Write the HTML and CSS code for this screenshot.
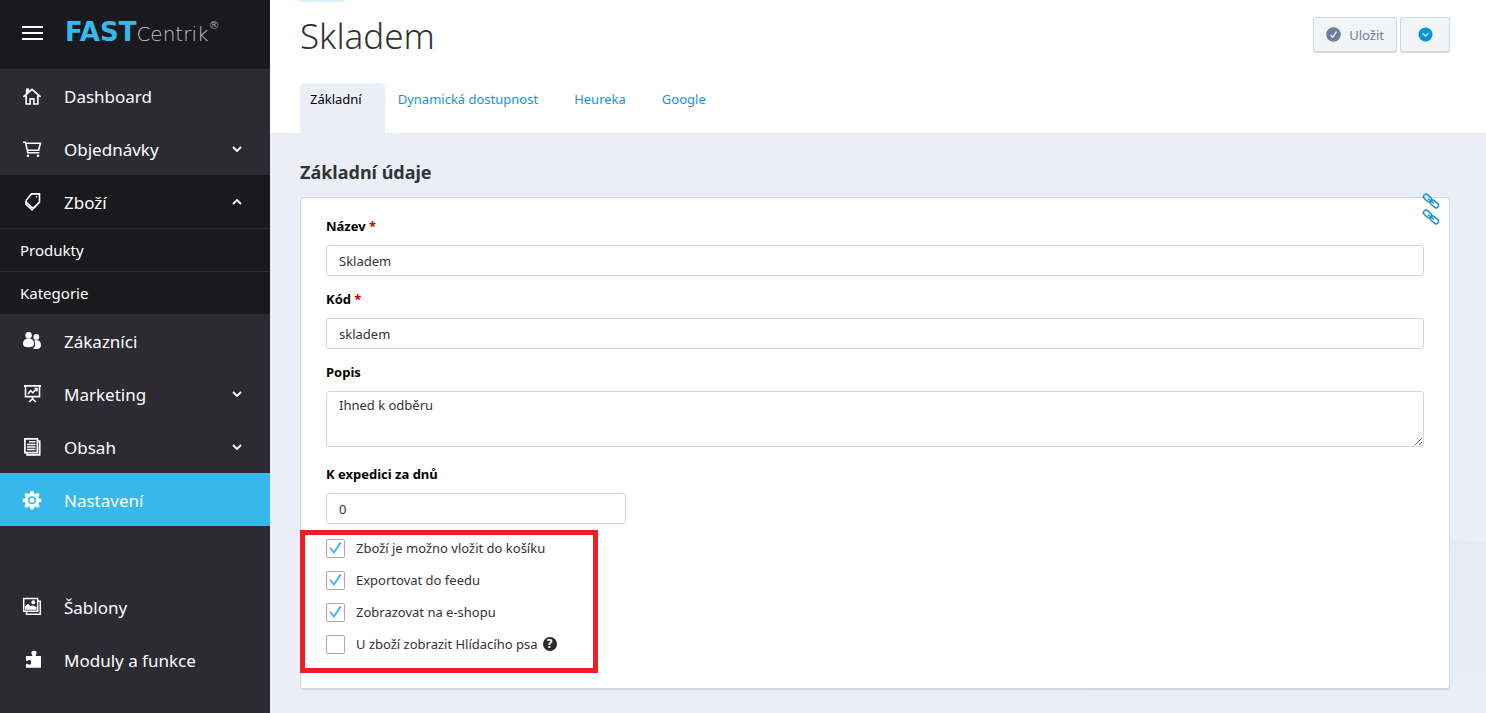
FILE: index.html
```html
<!DOCTYPE html>
<html lang="cs">
<head>
<meta charset="utf-8">
<meta name="viewport" content="width=device-width, initial-scale=1">
<title>Skladem</title>
<link rel="stylesheet" href="styles.css">
</head>
<body>
<div class="app">
  <aside class="sidebar">
    <div class="brand">
      <button class="menu-toggle" type="button" aria-label="Menu"><span></span><span></span><span></span></button>
      <a class="logo" href="#"><span class="logo-fast">FAST</span><span class="logo-centrik">Centrik</span><span class="logo-mark">®</span></a>
    </div>
    <nav class="nav">
      <a class="nav-item" href="#">
        <svg class="icon" viewBox="0 0 20 20" fill="none" stroke="currentColor" stroke-width="1.7"><path d="M1.4 10.800 10 3.400l8.600 7.400M4.200 9.500v8.500h4v-5.200h3.600v5.200h4V9.500M4.700 7.600V3.300h1.600v2.800"/></svg>
        <span>Dashboard</span>
      </a>
      <a class="nav-item" href="#">
        <svg class="icon" viewBox="0 0 20 20" fill="none" stroke="currentColor" stroke-width="1.6"><path d="M1 3.200h2.500l2.300 10.500h11.500M4 4.200h14.400l-1.800 7H5.400"/><circle cx="6" cy="16.700" r="1.300" fill="currentColor" stroke="none"/><circle cx="16" cy="16.700" r="1.300" fill="currentColor" stroke="none"/></svg>
        <span>Objednávky</span>
        <svg class="chevron" viewBox="0 0 10 6"><path d="M1 1l4 4 4-4"/></svg>
      </a>
      <div class="nav-group">
        <a class="nav-item" href="#">
          <svg class="icon" viewBox="0 0 20 20" fill="none" stroke="currentColor" stroke-width="1.6"><path d="M4.200 8.200 9.500 1.900h8v8.200l-5.300 5.400H9.800L4.200 10z"/><path d="M4 9.500v2.700l6 5.600 7-7.300"/><circle cx="14.600" cy="4.800" r=".8" fill="currentColor" stroke="none"/></svg>
          <span>Zboží</span>
          <svg class="chevron" viewBox="0 0 10 6"><path d="M1 5l4-4 4 4"/></svg>
        </a>
        <a class="nav-sub" href="#">Produkty</a>
        <a class="nav-sub" href="#">Kategorie</a>
      </div>
      <a class="nav-item" href="#">
        <svg class="icon" viewBox="0 0 20 20" fill="currentColor"><circle cx="6.600" cy="4.200" r="3.200"/><path d="M1 13c0-3.700 2.300-5.500 5.600-5.500 3.400 0 5.400 1.800 5.400 5.500 0 2.200-1.800 3.300-5.400 3.300S1 15.200 1 13z"/><circle cx="14.300" cy="5.900" r="2.900"/><path d="M12.200 9.500c4-1.200 6.800.7 6.800 4.600 0 2.800-1.500 4-4.500 4-1.800 0-3-.4-3.700-1 1.600-.7 2.400-2 2.400-3.900 0-1.500-.3-2.700-1-3.700z"/></svg>
        <span>Zákazníci</span>
      </a>
      <a class="nav-item" href="#">
        <svg class="icon" viewBox="0 0 20 20" fill="none" stroke="currentColor" stroke-width="1.600"><path d="M2 1.900h17M3.500 2v10.600h14V2M10.500 13v3M7 18l3.500-3 3.500 3"/><path d="M6 10l2.600-3.300 2.200 2L15 4.500M15 7.500v-3h-2.500" stroke-width="1.500"/></svg>
        <span>Marketing</span>
        <svg class="chevron" viewBox="0 0 10 6"><path d="M1 1l4 4 4-4"/></svg>
      </a>
      <a class="nav-item" href="#">
        <svg class="icon" viewBox="0 0 20 20" fill="none" stroke="currentColor" stroke-width="1.700"><path d="M2.900 1.900h12.500v13.700H2.900zM15.500 4h2.200v13.900H5v-2.300"/><path d="M7 4.800h6.500M5 7.500h8.500M5 10h8.500M5 12.600h8.500" stroke-width="1.500"/></svg>
        <span>Obsah</span>
        <svg class="chevron" viewBox="0 0 10 6"><path d="M1 1l4 4 4-4"/></svg>
      </a>
      <a class="nav-item nav-item-active" href="#">
        <svg class="icon" viewBox="0 0 20 20" fill="currentColor"><path fill-rule="evenodd" d="M8.500 1h3l.6 2.400 1.500.6 2.200-1.300 1.900 1.900-1.300 2.200.6 1.500 2.400.6v2.800l-2.400.6-.6 1.500 1.300 2.200-1.900 1.900-2.200-1.300-1.500.6-.6 2.400h-3l-.6-2.400-1.500-.6-2.200 1.300-1.900-1.900 1.300-2.200-.6-1.500-2.400-.6V8.900l2.400-.6.6-1.500-1.300-2.200 1.900-1.900L6.400 4l1.500-.6zM10 6.300a4 4 0 1 0 0 8 4 4 0 0 0 0-8zm0 1.500a2.500 2.500 0 1 1 0 5 2.500 2.500 0 0 1 0-5z"/></svg>
        <span>Nastavení</span>
      </a>
      <a class="nav-item nav-item-spaced" href="#">
        <svg class="icon" viewBox="0 0 20 20" fill="none" stroke="currentColor" stroke-width="1.500"><path d="M1.700 1.400h14v12.800h-14zM16 4.300h2.300v13H4.500v-2.800"/><path d="M3 12.800V9.200l3-2.400 2.500 2.200 2.500-.5 3.500 1.500v2.800z" fill="currentColor" stroke="none"/><circle cx="11.300" cy="5.300" r="2" fill="currentColor" stroke="none"/></svg>
        <span>Šablony</span>
      </a>
      <a class="nav-item" href="#">
        <svg class="icon" viewBox="0 0 20 20" fill="currentColor"><path d="M4 6h5.800c.8-.6.500-1-.1-1.800C8.700 2.200 9.900.7 12 .7s3.300 1.500 2.300 3.500c-.6.800-.9 1.200-.1 1.800H19v11.700H4v-3.500c.8-.6 1.300-.4 2 .1 1.600.9 3.200.1 3.200-1.900S7.600 9.500 6 10.500c-.7.500-1.200.6-2 0z"/></svg>
        <span>Moduly a funkce</span>
      </a>
    </nav>
  </aside>

  <main class="main">
    <header class="page-head">
      <div class="crumb"></div>
      <div class="title-row">
        <h1 class="title">Skladem</h1>
        <div class="actions">
          <button class="btn btn-save" type="button">
            <svg class="btn-icon" viewBox="0 0 15 15"><circle cx="7.500" cy="7.500" r="7.300" fill="#6f7f9b"/><path d="M4.500 8l2.200 2.300 3.800-5.600" fill="none" stroke="#f3f4f8" stroke-width="1.300"/></svg>
            <span>Uložit</span>
          </button>
          <button class="btn btn-more" type="button" aria-label="Další akce">
            <svg class="btn-icon" viewBox="0 0 15 15"><circle cx="7.500" cy="7.500" r="7" fill="#0596d5"/><path d="M4.500 6.200l3 2.800 3-2.800" fill="none" stroke="#d5edf8" stroke-width="1.200"/></svg>
          </button>
        </div>
      </div>
      <nav class="tabs">
        <a class="tab tab-active" href="#">Základní</a>
        <a class="tab" href="#">Dynamická dostupnost</a>
        <a class="tab" href="#">Heureka</a>
        <a class="tab" href="#">Google</a>
      </nav>
    </header>

    <section class="content">
      <svg class="backdrop" viewBox="0 0 400 174" preserveAspectRatio="none" aria-hidden="true">
        <defs><linearGradient id="fade" x1="0" y1="0" x2="0" y2="1"><stop offset="0" stop-color="#e5eaf3"/><stop offset="1" stop-color="#eaeef6"/></linearGradient></defs>
        <path d="M0 0 364 0l36 3v171H0z" fill="url(#fade)"/>
      </svg>
      <h2 class="section-title">Základní údaje</h2>
      <form class="card">
        <div class="card-links">
          <a href="#" aria-label="Odkaz"><svg class="link-icon" viewBox="0 0 18 16" fill="none" stroke="#1596d2" stroke-width="1.600"><rect x="1" y="2.500" width="9" height="5" rx="2.500" transform="rotate(42 5.500 5)"/><rect x="8" y="8.500" width="9" height="5" rx="2.500" transform="rotate(42 12.500 11)"/><path d="M6 5.500l6 5"/></svg></a>
          <a href="#" aria-label="Odkaz"><svg class="link-icon" viewBox="0 0 18 16" fill="none" stroke="#1596d2" stroke-width="1.600"><rect x="1" y="2.500" width="9" height="5" rx="2.500" transform="rotate(42 5.500 5)"/><rect x="8" y="8.500" width="9" height="5" rx="2.500" transform="rotate(42 12.500 11)"/><path d="M6 5.500l6 5"/></svg></a>
        </div>
        <div class="field">
          <label for="name">Název <span class="required">*</span></label>
          <input class="control" id="name" type="text" value="Skladem">
        </div>
        <div class="field">
          <label for="code">Kód <span class="required">*</span></label>
          <input class="control" id="code" type="text" value="skladem">
        </div>
        <div class="field field-area">
          <label for="desc">Popis</label>
          <textarea class="control area" id="desc">Ihned k odběru</textarea>
        </div>
        <div class="field field-last">
          <label for="days">K expedici za dnů</label>
          <input class="control control-short" id="days" type="text" value="0">
        </div>
        <div class="checks">
          <label class="check"><input type="checkbox" checked><span>Zboží je možno vložit do košíku</span></label>
          <label class="check"><input type="checkbox" checked><span>Exportovat do feedu</span></label>
          <label class="check"><input type="checkbox" checked><span>Zobrazovat na e-shopu</span></label>
          <label class="check"><input type="checkbox"><span>U zboží zobrazit Hlídacího psa</span><span class="help">?</span></label>
        </div>
      </form>
    </section>
  </main>
</div>
</body>
</html>
```

FILE: styles.css
```css
* { box-sizing: border-box; }

body {
  margin: 0;
  font-family: "Noto Sans", sans-serif;
  font-size: 13px;
  line-height: 20px;
  color: #333;
  background: #ebeef6;
}

a { text-decoration: none; }
svg { display: block; flex: none; }

.app { display: flex; min-height: 100vh; }

/* Sidebar */
.sidebar { flex: none; width: 270px; background: #2c2b34; }

.brand {
  display: flex;
  align-items: center;
  gap: 22px;
  height: 69px;
  padding: 0 0 3px 22px;
  background: #1a191d;
}

.menu-toggle {
  display: grid;
  gap: 4px;
  width: 21px;
  padding: 0;
  border: 0;
  background: none;
}
.menu-toggle span { height: 2px; background: #fff; }

.logo {
  display: flex;
  align-items: baseline;
  font-family: "DejaVu Sans", sans-serif;
  line-height: 24px;
}
.logo-fast { font-size: 26px; font-weight: 700; color: #36b9ea; }
.logo-centrik { font-size: 20px; font-weight: 200; color: #c4c4c8; }
.logo-mark { align-self: flex-start; font-size: 11px; line-height: 12px; color: #a3a3a7; }

.nav-item {
  display: flex;
  align-items: center;
  gap: 22px;
  height: 53px;
  padding: 2px 28px 0 22px;
  font-size: 17px;
  line-height: 24px;
  color: #fff;
}
.nav-item-active { background: #36b9ea; }
.nav-item-spaced { margin-top: 54px; }
.nav-group { background: #1a191d; }

.nav-sub {
  display: block;
  height: 43px;
  padding-left: 20px;
  border-top: 1px solid #2c2b34;
  font-size: 15px;
  line-height: 42px;
  color: #fff;
}

.icon { width: 20px; height: 20px; margin-bottom: 2px; }

.chevron {
  width: 10px;
  height: 6px;
  margin: 0 0 2px auto;
  fill: none;
  stroke: #fff;
  stroke-width: 1.8;
}

/* Page head */
.main { flex: 1; min-width: 0; display: flex; flex-direction: column; }

.page-head { padding: 0 36px 0 30px; background: #fff; }

.crumb {
  width: 45px;
  height: 2px;
  background: #d7f2fb;
  border-radius: 0 0 3px 3px;
}

.title-row {
  display: flex;
  justify-content: space-between;
  padding-top: 15px;
  height: 81px;
}

.title {
  margin: 0;
  font-size: 35px;
  font-weight: 300;
  line-height: 38px;
}

.actions { display: flex; gap: 3px; }

.btn {
  display: flex;
  align-items: center;
  justify-content: center;
  gap: 8px;
  height: 36px;
  padding: 0 12px;
  border: 1px solid #d1d8e1;
  border-bottom-width: 2px;
  border-radius: 3px;
  background: #f3f4f8;
  font: inherit;
  color: #6f7f9b;
}
.btn-more { width: 50px; }
.btn-icon { width: 15px; height: 15px; }

.tabs { display: flex; gap: 3px; }

.tab {
  height: 50px;
  padding: 6px 23px 0 10px;
  border-radius: 5px 5px 0 0;
  color: #1596d2;
}
.tab-active { background: #ebeef6; color: #000; }

/* Content */
.content {
  position: relative;
  flex: 1;
  padding: 27px 36px 24px 30px;
}

.backdrop {
  position: absolute;
  right: 0;
  bottom: 0;
  width: 400px;
  height: 174px;
}

.section-title {
  margin: 0 0 13px;
  font-size: 18px;
  font-weight: 700;
  line-height: 24px;
}

.card {
  position: relative;
  padding: 18px 25px 28px;
  border: 1px solid #d1d8e1;
  border-bottom-width: 2px;
  border-radius: 4px;
  background: #fff;
}

.card-links { position: absolute; top: -5px; right: 9px; }
.link-icon { width: 18px; height: 16px; }

.field { display: grid; gap: 9px; margin-bottom: 13px; }
.field-area { margin-bottom: 17px; }
.field-last { margin-bottom: 8px; }
.field label { font-weight: 700; color: #000; }
.required { color: #c00; }

.control {
  width: 100%;
  height: 31px;
  margin: 0;
  padding: 0 12px;
  border: 1px solid #d1d8e1;
  border-radius: 3px;
  background: #fff;
  font: inherit;
  color: #333;
}
.control-short { width: 300px; }
.area { display: block; height: 56px; padding: 3px 12px; resize: vertical; }

.checks { position: relative; width: max-content; }

.checks::after {
  content: "";
  position: absolute;
  inset: -2px -41px -13px -26px;
  border: 5px solid #ee1c25;
  pointer-events: none;
}

.check {
  display: flex;
  align-items: center;
  gap: 5px;
  height: 32px;
}

.check input {
  appearance: none;
  flex: none;
  display: grid;
  place-items: center;
  width: 19px;
  height: 19px;
  margin: 0 6px 0 0;
  border: 1px solid #a2aab8;
  border-radius: 2px;
  background: #fff;
}
.check input:checked::before {
  content: "";
  width: 12px;
  height: 12px;
  background: #36b9ea;
  clip-path: polygon(0 55%, 12% 45%, 36% 74%, 86% 0, 100% 8%, 38% 100%);
}

.help {
  width: 14px;
  height: 14px;
  border-radius: 50%;
  background: #2b2b2b;
  font-size: 12px;
  font-weight: 700;
  line-height: 14px;
  text-align: center;
  color: #fff;
}
```
